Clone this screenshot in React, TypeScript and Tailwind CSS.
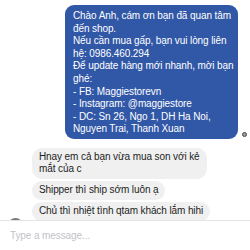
import React from 'react';

const shopLines = [
  'Chào Anh, cám ơn bạn đã quan tâm',
  'đến shop.',
  'Nếu cần mua gấp, bạn vui lòng liên',
  'hệ: 0986.460.294',
  'Để update hàng mới nhanh, mời bạn',
  'ghé:',
  '- FB: Maggiestorevn',
  '- Instagram: @maggiestore',
  '- DC: Sn 26, Ngo 1, DH Ha Noi,',
  'Nguyen Trai, Thanh Xuan',
];

function GrayBubble({ lines }: { lines: string[] }) {
  return (
    <div className="self-start rounded-[10px] bg-[#f0f0f1] px-[7px] py-[3.5px] text-[#1c1e21]">
      {lines.map((l, i) => (
        <div key={i} className="whitespace-nowrap leading-[12px]">
          {l}
        </div>
      ))}
    </div>
  );
}

export default function App() {
  return (
    <div
      className="flex h-[250px] w-[250px] flex-col overflow-hidden bg-white text-[10px] tracking-[-0.1px]"
      style={{ fontFamily: '"Liberation Sans", Arial, sans-serif' }}
    >
      {/* messages */}
      <div className="flex h-[220px] flex-col overflow-hidden pt-[5px]">
        <div className="flex items-end pr-[3px]">
          <div className="ml-auto mr-[4px] w-[173px] rounded-[9px] bg-[#3157a7] px-[8px] pt-[5px] pb-[3px] text-white">
            {shopLines.map((l, i) => (
              <div key={i} className="whitespace-nowrap leading-[12.6px]">
                {l}
              </div>
            ))}
          </div>
          {/* seen avatar */}
          <div className="mb-[2px] h-[5px] w-[5px] rounded-full border border-[#4a4a4a] bg-[#9a9a9a]" />
        </div>

        <div className="relative mt-[9px] flex flex-col gap-[2px] pl-[32px]">
          <GrayBubble lines={['Hnay em cả bạn vừa mua son với kẻ', 'mắt của c']} />
          <GrayBubble lines={['Shipper thì ship sớm luôn ạ']} />
          <GrayBubble lines={['Chủ thì nhiệt tình qtam khách lắm hihi']} />
          <div className="absolute bottom-[-12px] left-[8px] h-[15px] w-[15px] rounded-full bg-[#7c786f]" />
        </div>
      </div>

      {/* composer */}
      <div className="flex flex-1 items-center border-t border-[#e4e4e4] bg-white px-[10px]">
        <span className="text-[#bfc2c7]">Type a message...</span>
      </div>
    </div>
  );
}
